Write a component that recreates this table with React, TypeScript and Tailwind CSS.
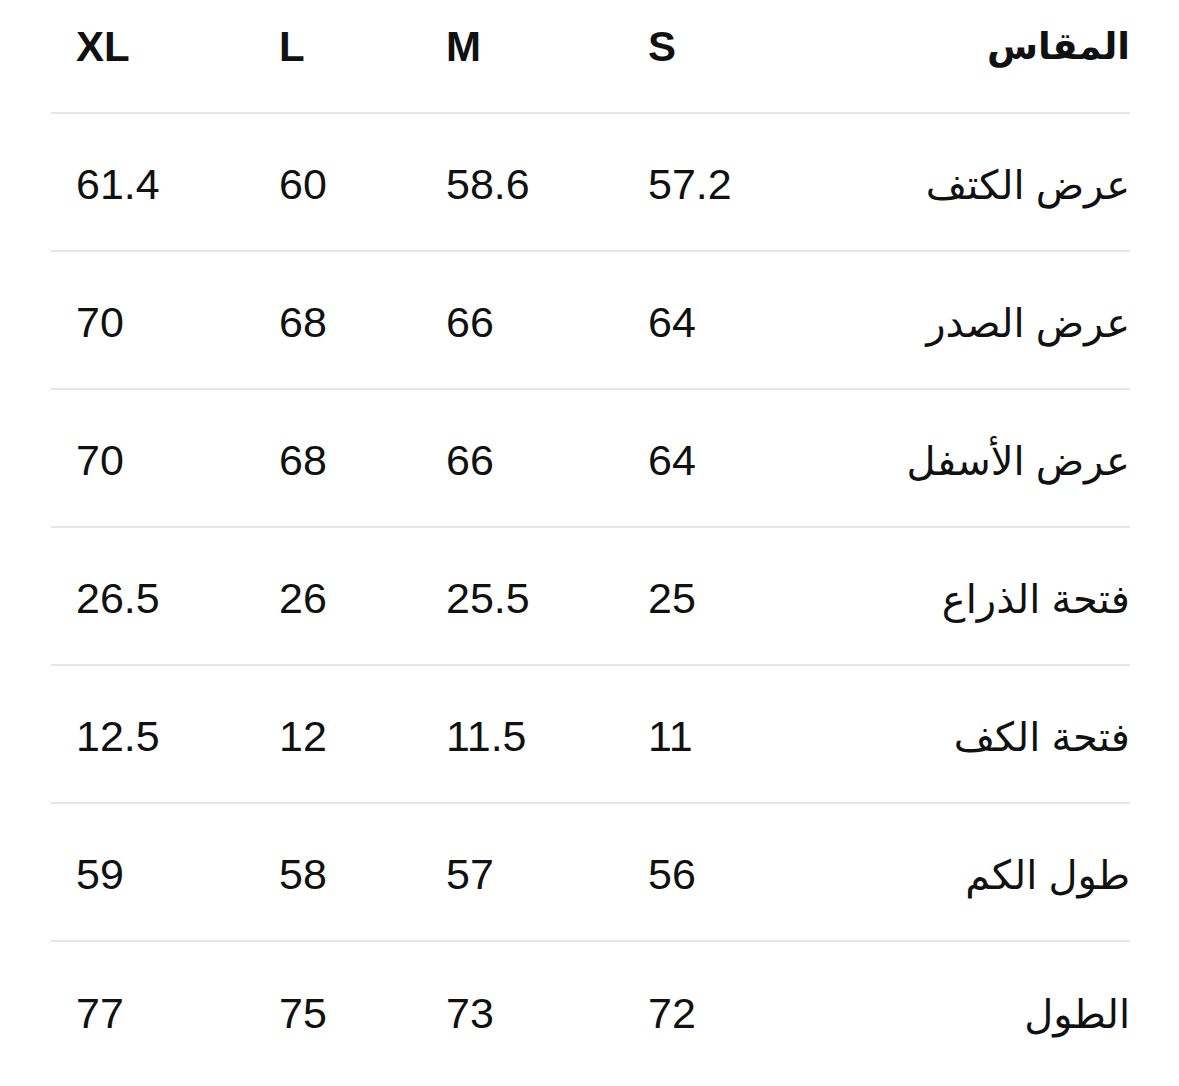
const sizes = ["S", "M", "L", "XL"];

const rows: { label: string; values: string[] }[] = [
  { label: "عرض الكتف", values: ["57.2", "58.6", "60", "61.4"] },
  { label: "عرض الصدر", values: ["64", "66", "68", "70"] },
  { label: "عرض الأسفل", values: ["64", "66", "68", "70"] },
  { label: "فتحة الذراع", values: ["25", "25.5", "26", "26.5"] },
  { label: "فتحة الكف", values: ["11", "11.5", "12", "12.5"] },
  { label: "طول الكم", values: ["56", "57", "58", "59"] },
  { label: "الطول", values: ["72", "73", "75", "77"] },
];

const cols = "grid grid-cols-[300px_207px_202px_167px_203px]";

const App = () => {
  return (
    <div
      className="min-h-screen w-[1179px] bg-white text-[#111111] pl-[51px] pr-[49px]"
      style={{ fontFamily: '"Liberation Sans", "DejaVu Sans", sans-serif' }}
    >
      <div dir="rtl" className="w-[1079px]">
        {/* header */}
        <div className={`${cols} h-[114px] border-b-2 border-[#e6e6e6] pb-[19px] items-center`}>
          <div className="text-right text-[37px] font-bold leading-none">المقاس</div>
          {sizes.map((s) => (
            <div key={s} dir="ltr" className="text-left pl-[25px] text-[42px] font-bold leading-none">
              {s}
            </div>
          ))}
        </div>

        {rows.map((row, i) => (
          <div
            key={row.label}
            className={`${cols} h-[138px] pt-[5px] items-center ${
              i < rows.length - 1 ? "border-b-2 border-[#e6e6e6]" : ""
            }`}
          >
            <div className="text-right text-[40px] leading-none">{row.label}</div>
            {row.values.map((v, j) => (
              <div key={j} dir="ltr" className="text-left pl-[25px] text-[43px] leading-none">
                {v}
              </div>
            ))}
          </div>
        ))}
      </div>
    </div>
  );
};

export default App;
